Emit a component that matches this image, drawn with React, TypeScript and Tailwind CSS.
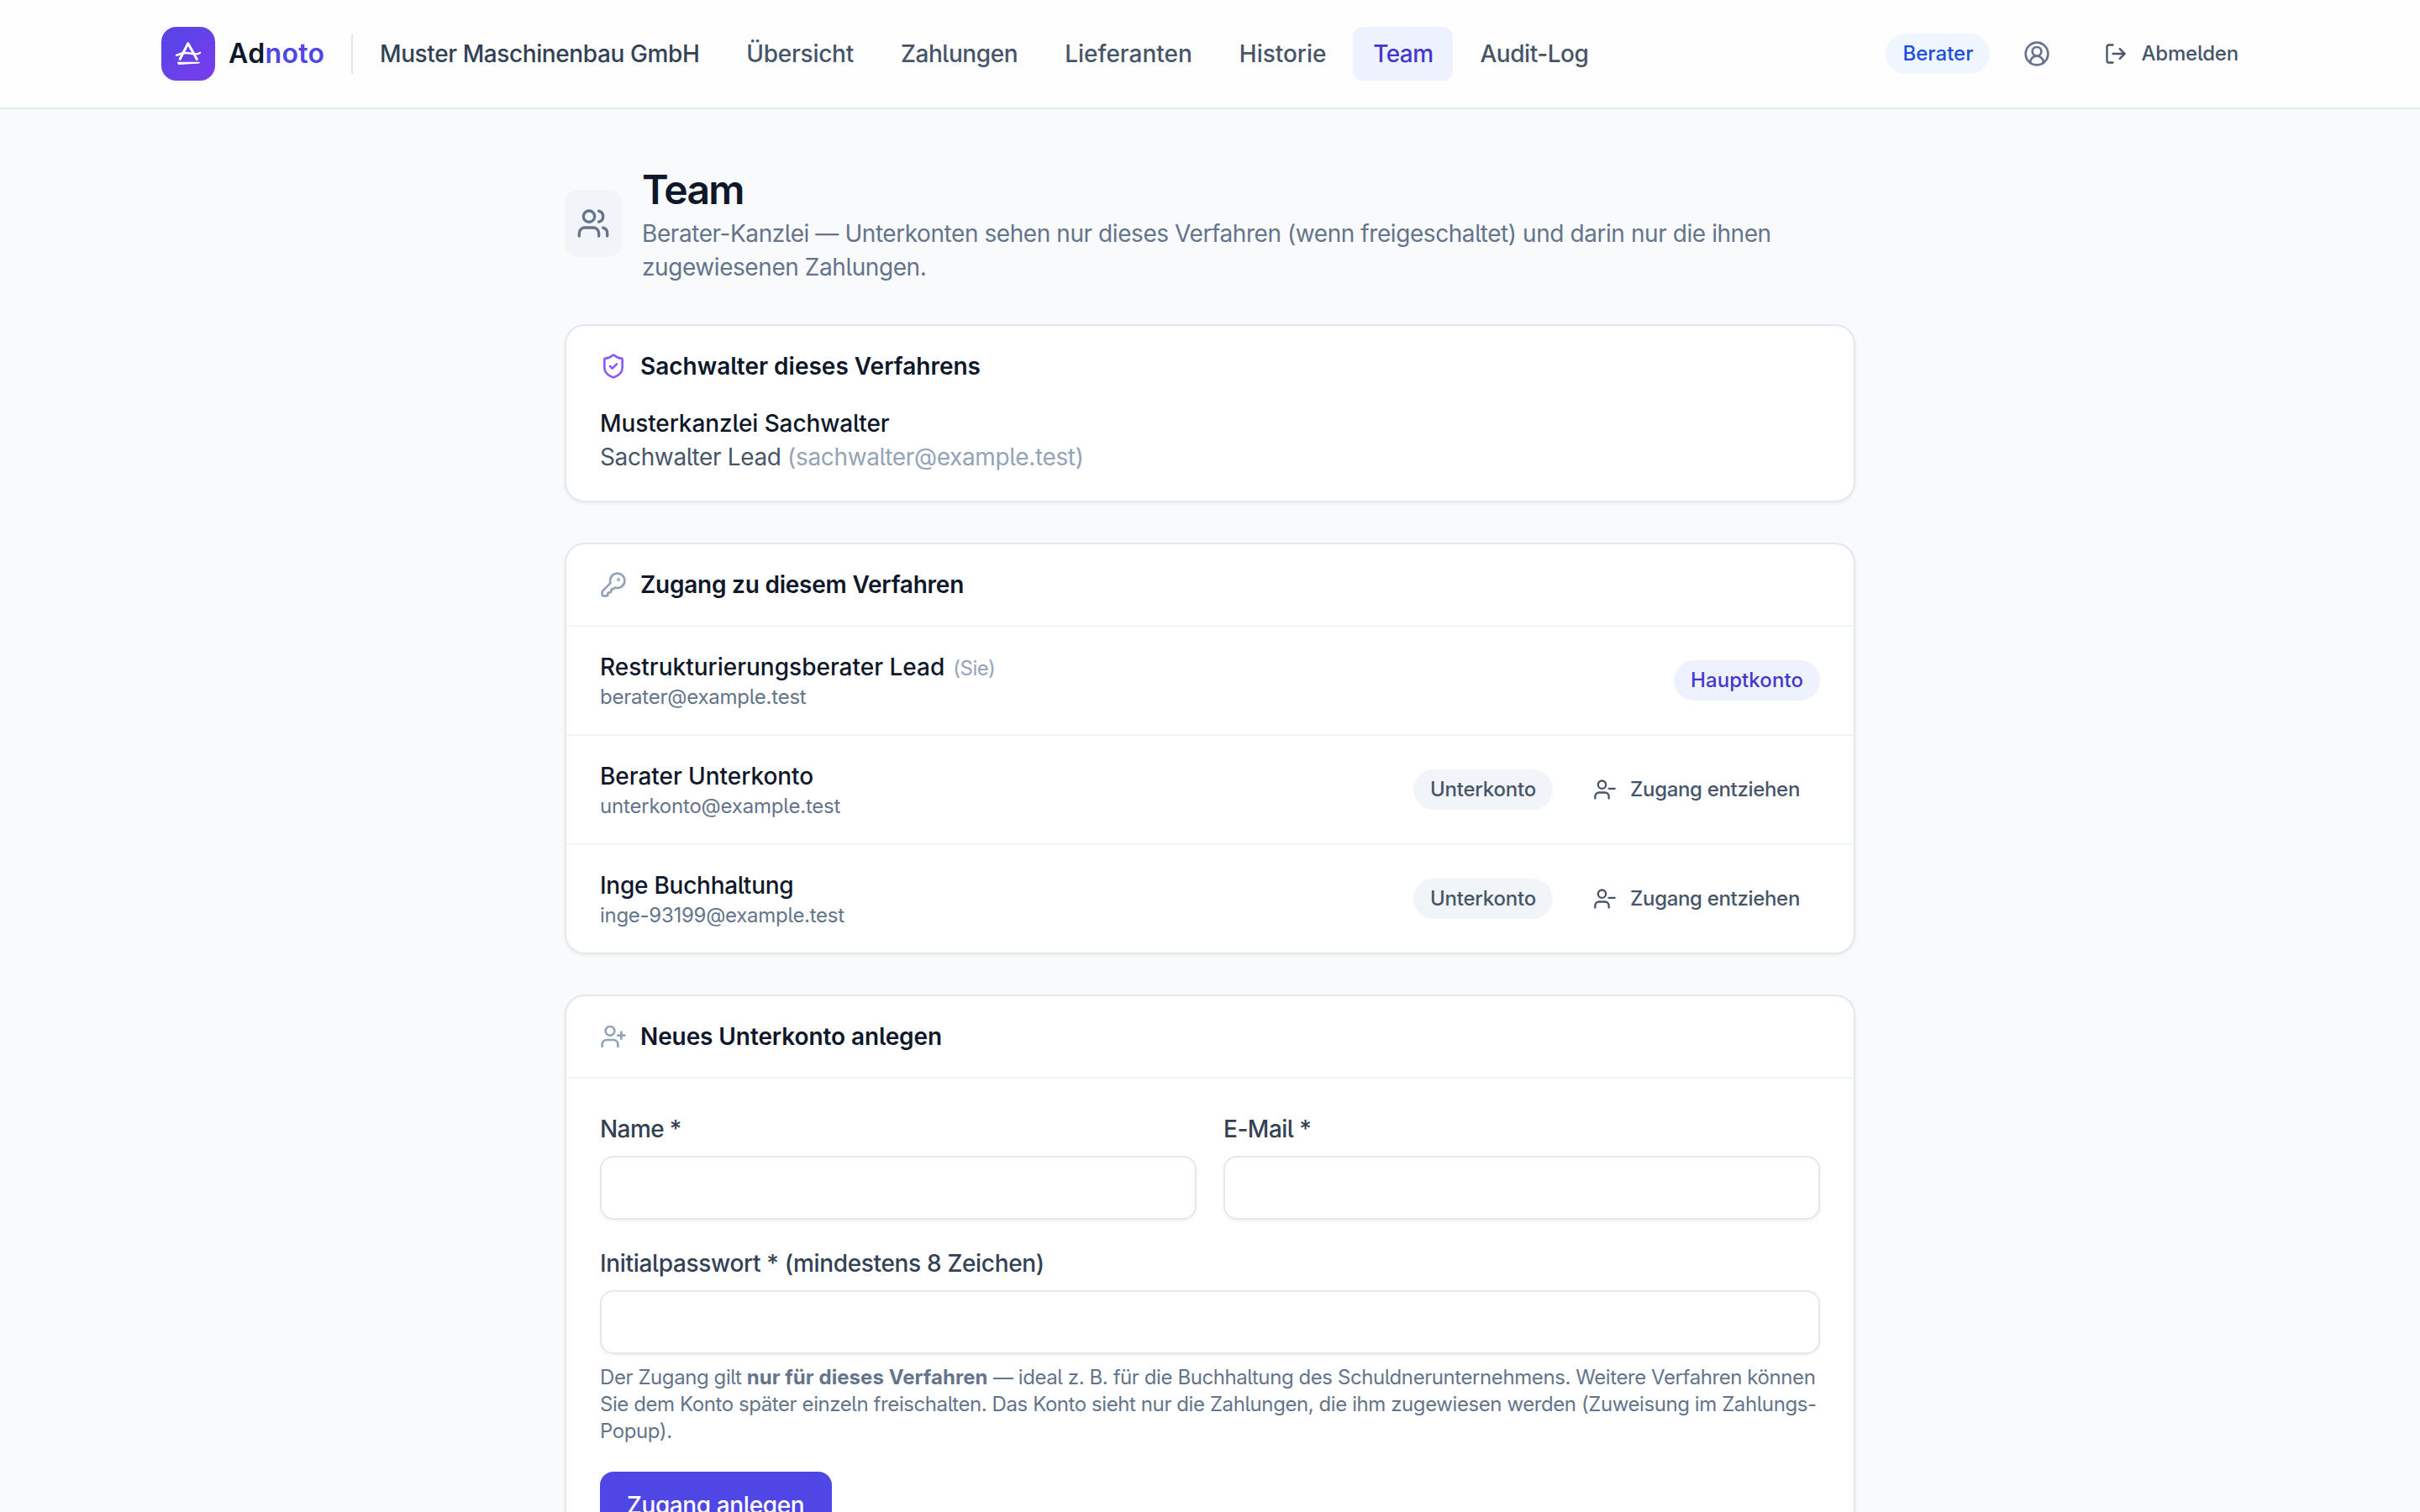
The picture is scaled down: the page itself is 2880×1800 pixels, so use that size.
import type { ReactNode } from "react";
import {
  CircleUserRound,
  KeyRound,
  LogOut,
  ShieldCheck,
  UserMinus,
  UserPlus,
  Users,
} from "lucide-react";

function Logo() {
  return (
    <div className="flex items-center gap-4">
      <div className="size-16 rounded-[18px] bg-linear-to-br from-[#4f46e5] to-[#7c3aed] shadow-[0_2px_4px_rgba(0,0,0,0.06)]">
        <svg viewBox="0 0 64 64" className="size-16" fill="none" stroke="#fff" strokeLinecap="round" strokeLinejoin="round">
          <path d="M22.2 38.3 31.8 19.8 42.3 38.4" strokeWidth="3" />
          <path d="M18 33.8C24 31 29 30.6 34 31.4S43 33.6 46 30.8" strokeWidth="2.4" />
          <path d="M19.6 42.2H45V42.9L20.4 44.4Z" strokeWidth="1.1" fill="#fff" />
        </svg>
      </div>
      <span className="w-[114px] text-[32px] leading-10 font-semibold tracking-[0.35px] text-[#0f172a]">
        Ad<span className="text-[#4f46e5]">noto</span>
      </span>
    </div>
  );
}

const navItems = [
  { label: "Übersicht", track: "tracking-[-0.27px]", active: false },
  { label: "Zahlungen", track: "tracking-[-0.42px]", active: false },
  { label: "Lieferanten", track: "tracking-[0px]", active: false },
  { label: "Historie", track: "tracking-[-0.05px]", active: false },
  { label: "Team", track: "tracking-[-0.62px]", active: true },
  { label: "Audit-Log", track: "tracking-[-0.45px]", active: false },
];

function Header() {
  return (
    <header className="flex h-[130px] items-center justify-between border-b-2 border-[#e2e8f0] bg-[#fefeff] px-48 whitespace-nowrap">
      <div className="flex items-center">
        <Logo />
        <div className="mx-8 h-12 w-0.5 bg-[#e2e8f0]" />
        <span className="font-medium tracking-[-0.4px] text-[#334155]">Muster Maschinenbau GmbH</span>
        <nav className="ml-8 flex gap-2">
          {navItems.map((item) => (
            <a
              key={item.label}
              className={`flex h-16 items-center rounded-xl px-6 font-medium ${item.track} ${
                item.active ? "bg-[#eef2ff] text-[#4338ca]" : "text-[#475569]"
              }`}
            >
              {item.label}
            </a>
          ))}
        </nav>
      </div>
      <div className="flex items-center gap-6">
        <span className="flex h-12 items-center rounded-full bg-[#eff6ff] px-5 text-2xl font-medium text-[#1d4ed8]">Berater</span>
        <button className="flex size-16 items-center justify-center text-[#64748b]">
          <CircleUserRound size={32} />
        </button>
        <button className="flex h-14 items-center gap-4 px-6 text-2xl font-medium tracking-[-0.2px] text-[#475569]">
          <LogOut size={28} />
          Abmelden
        </button>
      </div>
    </header>
  );
}

function Card({ children }: { children: ReactNode }) {
  return (
    <section className="mt-12 rounded-3xl border-2 border-[#e2e8f0] bg-white shadow-[0_2px_4px_rgba(15,23,42,0.05)]">
      {children}
    </section>
  );
}

function CardTitle({ icon, track, children }: { icon: ReactNode; track: string; children: ReactNode }) {
  return (
    <h2 className={`flex h-8 items-center gap-4 leading-8 font-semibold text-[#0f172a] ${track}`}>
      {icon}
      {children}
    </h2>
  );
}

const members = [
  { name: "Restrukturierungsberater Lead", nameTrack: "tracking-[0px]", mail: "berater@example.test", mailTrack: "tracking-[-0.23px]", main: true },
  { name: "Berater Unterkonto", nameTrack: "tracking-[-0.04px]", mail: "unterkonto@example.test", mailTrack: "tracking-[-0.2px]", main: false },
  { name: "Inge Buchhaltung", nameTrack: "tracking-[-0.26px]", mail: "inge-93199@example.test", mailTrack: "tracking-[-0.28px]", main: false },
];

function Field({ label, track }: { label: string; track: string }) {
  return (
    <label className="block">
      <span className={`block leading-10 font-medium text-[#334155] ${track}`}>{label}</span>
      <input className="mt-3 block h-[76px] w-full rounded-2xl border-2 border-[#e2e8f0] bg-white px-6 shadow-[0_2px_4px_rgba(15,23,42,0.05)] outline-none" />
    </label>
  );
}

export default function App() {
  return (
    <div className="h-[1800px] overflow-hidden bg-[#f8fafc] font-['Inter',sans-serif] text-[28px] leading-10 [font-feature-settings:'cv05']">
      <Header />
      <main className="mx-auto w-[1536px] pt-16">
        <div className="flex items-center gap-6">
          <div className="flex h-20 w-[68px] shrink-0 items-center justify-center rounded-2xl bg-[#f1f5f9] text-[#64748b]">
            <Users size={40} />
          </div>
          <div>
            <h1 className="text-5xl leading-[64px] font-semibold tracking-[-1.7px] text-[#0f172a]">Team</h1>
            <p className="tracking-[-0.43px] text-[#64748b]">
              Berater-Kanzlei — Unterkonten sehen nur dieses Verfahren (wenn freigeschaltet) und darin nur die ihnen
              zugewiesenen Zahlungen.
            </p>
          </div>
        </div>

        <Card>
          <div className="px-10 py-8">
            <CardTitle track="tracking-[0px]" icon={<ShieldCheck size={32} className="text-[#8b5cf6]" />}>
              Sachwalter dieses Verfahrens
            </CardTitle>
            <p className="mt-8 font-medium tracking-[-0.1px] text-[#0f172a]">Musterkanzlei Sachwalter</p>
            <p className="tracking-[-0.35px] text-[#475569]">
              Sachwalter Lead <span className="text-[#94a3b8]">(sachwalter@example.test)</span>
            </p>
          </div>
        </Card>

        <Card>
          <div className="px-10 py-8">
            <CardTitle track="tracking-[-0.23px]" icon={<KeyRound size={32} className="text-[#94a3b8]" />}>
              Zugang zu diesem Verfahren
            </CardTitle>
          </div>
          <ul>
            {members.map((m) => (
              <li key={m.mail} className="flex items-center justify-between border-t-2 border-[#f1f5f9] px-10 py-7">
                <div>
                  <p className={`font-medium text-[#0f172a] ${m.nameTrack}`}>
                    {m.name}
                    {m.main && <span className="ml-2.5 text-2xl leading-8 font-normal tracking-[-0.5px] text-[#94a3b8]">(Sie)</span>}
                  </p>
                  <p className={`text-2xl leading-8 text-[#64748b] ${m.mailTrack}`}>{m.mail}</p>
                </div>
                {m.main ? (
                  <span className="flex h-12 items-center rounded-full bg-[#eef2ff] px-5 text-2xl font-medium tracking-[0.08px] text-[#4338ca]">
                    Hauptkonto
                  </span>
                ) : (
                  <div className="flex items-center gap-6">
                    <span className="flex h-12 items-center rounded-full bg-[#f1f5f9] px-5 text-2xl font-medium tracking-[-0.2px] text-[#475569]">
                      Unterkonto
                    </span>
                    <button className="flex h-14 items-center gap-4 px-6 text-2xl font-medium tracking-[-0.33px] text-[#475569]">
                      <UserMinus size={28} />
                      Zugang entziehen
                    </button>
                  </div>
                )}
              </li>
            ))}
          </ul>
        </Card>

        <Card>
          <div className="border-b-2 border-[#f1f5f9] px-10 py-8">
            <CardTitle track="tracking-[-0.1px]" icon={<UserPlus size={32} className="text-[#94a3b8]" />}>
              Neues Unterkonto anlegen
            </CardTitle>
          </div>
          <form className="p-10">
            <div className="grid grid-cols-2 gap-8">
              <Field label="Name *" track="tracking-[-0.6px]" />
              <Field label="E-Mail *" track="tracking-[-0.5px]" />
              <div className="col-span-2">
                <Field label="Initialpasswort * (mindestens 8 Zeichen)" track="tracking-[-0.33px]" />
                <p className="mt-3 text-2xl leading-8 tracking-[-0.42px] text-[#64748b]">
                  Der Zugang gilt <strong className="font-bold tracking-[0.06px]">nur für dieses Verfahren</strong> — ideal z. B. für
                  die Buchhaltung des Schuldnerunternehmens. Weitere Verfahren können Sie dem Konto später einzeln freischalten. Das
                  Konto sieht nur die Zahlungen, die ihm zugewiesen werden (Zuweisung im Zahlungs-Popup).
                </p>
              </div>
            </div>
            <button
              type="button"
              className="mt-8 flex h-20 w-[276px] items-center rounded-2xl bg-[#4f46e5] px-8 font-medium tracking-[-0.42px] whitespace-nowrap text-white"
            >
              Zugang anlegen
            </button>
          </form>
        </Card>
      </main>
    </div>
  );
}
